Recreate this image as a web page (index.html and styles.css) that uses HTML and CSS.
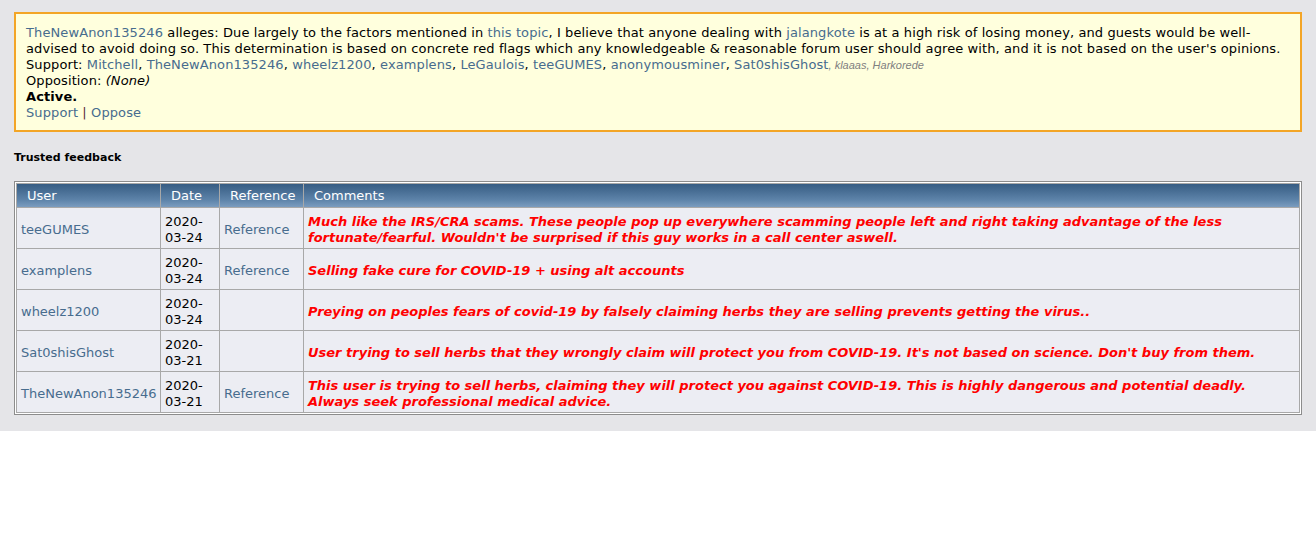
FILE: index.html
```html
<!DOCTYPE html>
<html lang="en">
<head>
  <meta charset="UTF-8" />
  <title>Trust - jalangkote</title>
  <link rel="stylesheet" href="styles.css">
</head>
<body>
  <div class="page">
    <div class="flag-box">
      <a href="#">TheNewAnon135246</a> alleges: Due largely to the factors mentioned in <a href="#">this topic</a>, I believe that anyone dealing with <a href="#">jalangkote</a> is at a high risk of losing money, and guests would be well-advised to avoid doing so. This determination is based on concrete red flags which any knowledgeable &amp; reasonable forum user should agree with, and it is not based on the user's opinions.<br>
      Support: <a href="#">Mitchell</a>, <a href="#">TheNewAnon135246</a>, <a href="#">wheelz1200</a>, <a href="#">examplens</a>, <a href="#">LeGaulois</a>, <a href="#">teeGUMES</a>, <a href="#">anonymousminer</a>, <a href="#">Sat0shisGhost</a><span class="minor">, <a href="#">klaaas</a>, <a href="#">Harkorede</a></span><br>
      Opposition: <i>(None)</i><br>
      <b>Active.</b><br>
      <a href="#">Support</a> <span class="sep">|</span> <a href="#">Oppose</a>
    </div>

    <h3 class="section-title">Trusted feedback</h3>

    <div class="tborder">
      <table class="feedback">
        <colgroup>
          <col class="col-user">
          <col class="col-date">
          <col class="col-ref">
          <col>
        </colgroup>
        <thead>
          <tr>
            <th>User</th>
            <th>Date</th>
            <th>Reference</th>
            <th>Comments</th>
          </tr>
        </thead>
        <tbody>
          <tr>
            <td><a href="#">teeGUMES</a></td>
            <td>2020-03-24</td>
            <td><a href="#">Reference</a></td>
            <td class="comment">Much like the IRS/CRA scams. These people pop up everywhere scamming people left and right taking advantage of the less fortunate/fearful. Wouldn't be surprised if this guy works in a call center aswell.</td>
          </tr>
          <tr>
            <td><a href="#">examplens</a></td>
            <td>2020-03-24</td>
            <td><a href="#">Reference</a></td>
            <td class="comment">Selling fake cure for COVID-19 + using alt accounts</td>
          </tr>
          <tr>
            <td><a href="#">wheelz1200</a></td>
            <td>2020-03-24</td>
            <td></td>
            <td class="comment">Preying on peoples fears of covid-19 by falsely claiming herbs they are selling prevents getting the virus..</td>
          </tr>
          <tr>
            <td><a href="#">Sat0shisGhost</a></td>
            <td>2020-03-21</td>
            <td></td>
            <td class="comment">User trying to sell herbs that they wrongly claim will protect you from COVID-19. It's not based on science. Don't buy from them.</td>
          </tr>
          <tr>
            <td><a href="#">TheNewAnon135246</a></td>
            <td>2020-03-21</td>
            <td><a href="#">Reference</a></td>
            <td class="comment">This user is trying to sell herbs, claiming they will protect you against COVID-19. This is highly dangerous and potential deadly. Always seek professional medical advice.</td>
          </tr>
        </tbody>
      </table>
    </div>
  </div>
</body>
</html>
```

FILE: styles.css
```css
body {
  margin: 0;
  background: #fff;
  color: #000;
  font-family: 'DejaVu Sans', Verdana, sans-serif;
  font-size: 13px;
}

a {
  color: #476c8e;
  text-decoration: none;
}

.page {
  background: #e5e5e8;
  padding: 12px 14px 16px;
}

.flag-box {
  background: #ffffdd;
  border: 2px solid #f3a526;
  padding: 11px 10px 9px;
  line-height: 16px;
  letter-spacing: 0.1px;
}

.minor {
  font-family: 'Liberation Sans', Arial, sans-serif;
  font-size: 11px;
  font-style: italic;
  letter-spacing: 0;
  color: #808080;
}

.minor a {
  color: #808080;
}

.sep {
  color: #5a2a3a;
}

.section-title {
  font-size: 11px;
  font-weight: bold;
  margin: 19px 0 17px;
}

.tborder {
  border: 1px solid #8c8c8c;
  padding: 1px;
  background: #fff;
}

.feedback {
  width: 100%;
  table-layout: fixed;
  border-collapse: separate;
  border-spacing: 1px;
  background: #a8a8a8;
}

.col-user { width: 143px; }
.col-date { width: 58px; }
.col-ref { width: 83px; }

.feedback th {
  background: linear-gradient(to bottom, #365c83, #5e84aa 70%, #7b9cbf);
  color: #fff;
  font-weight: normal;
  text-align: left;
  padding: 3px 10px;
  height: 17px;
  line-height: 16px;
}

.feedback td {
  background: #ecedf3;
  padding: 6px 4px 2px;
  line-height: 16px;
  height: 32px;
  vertical-align: middle;
}

.feedback td.comment {
  color: #f00;
  font-weight: bold;
  font-style: italic;
}
```
